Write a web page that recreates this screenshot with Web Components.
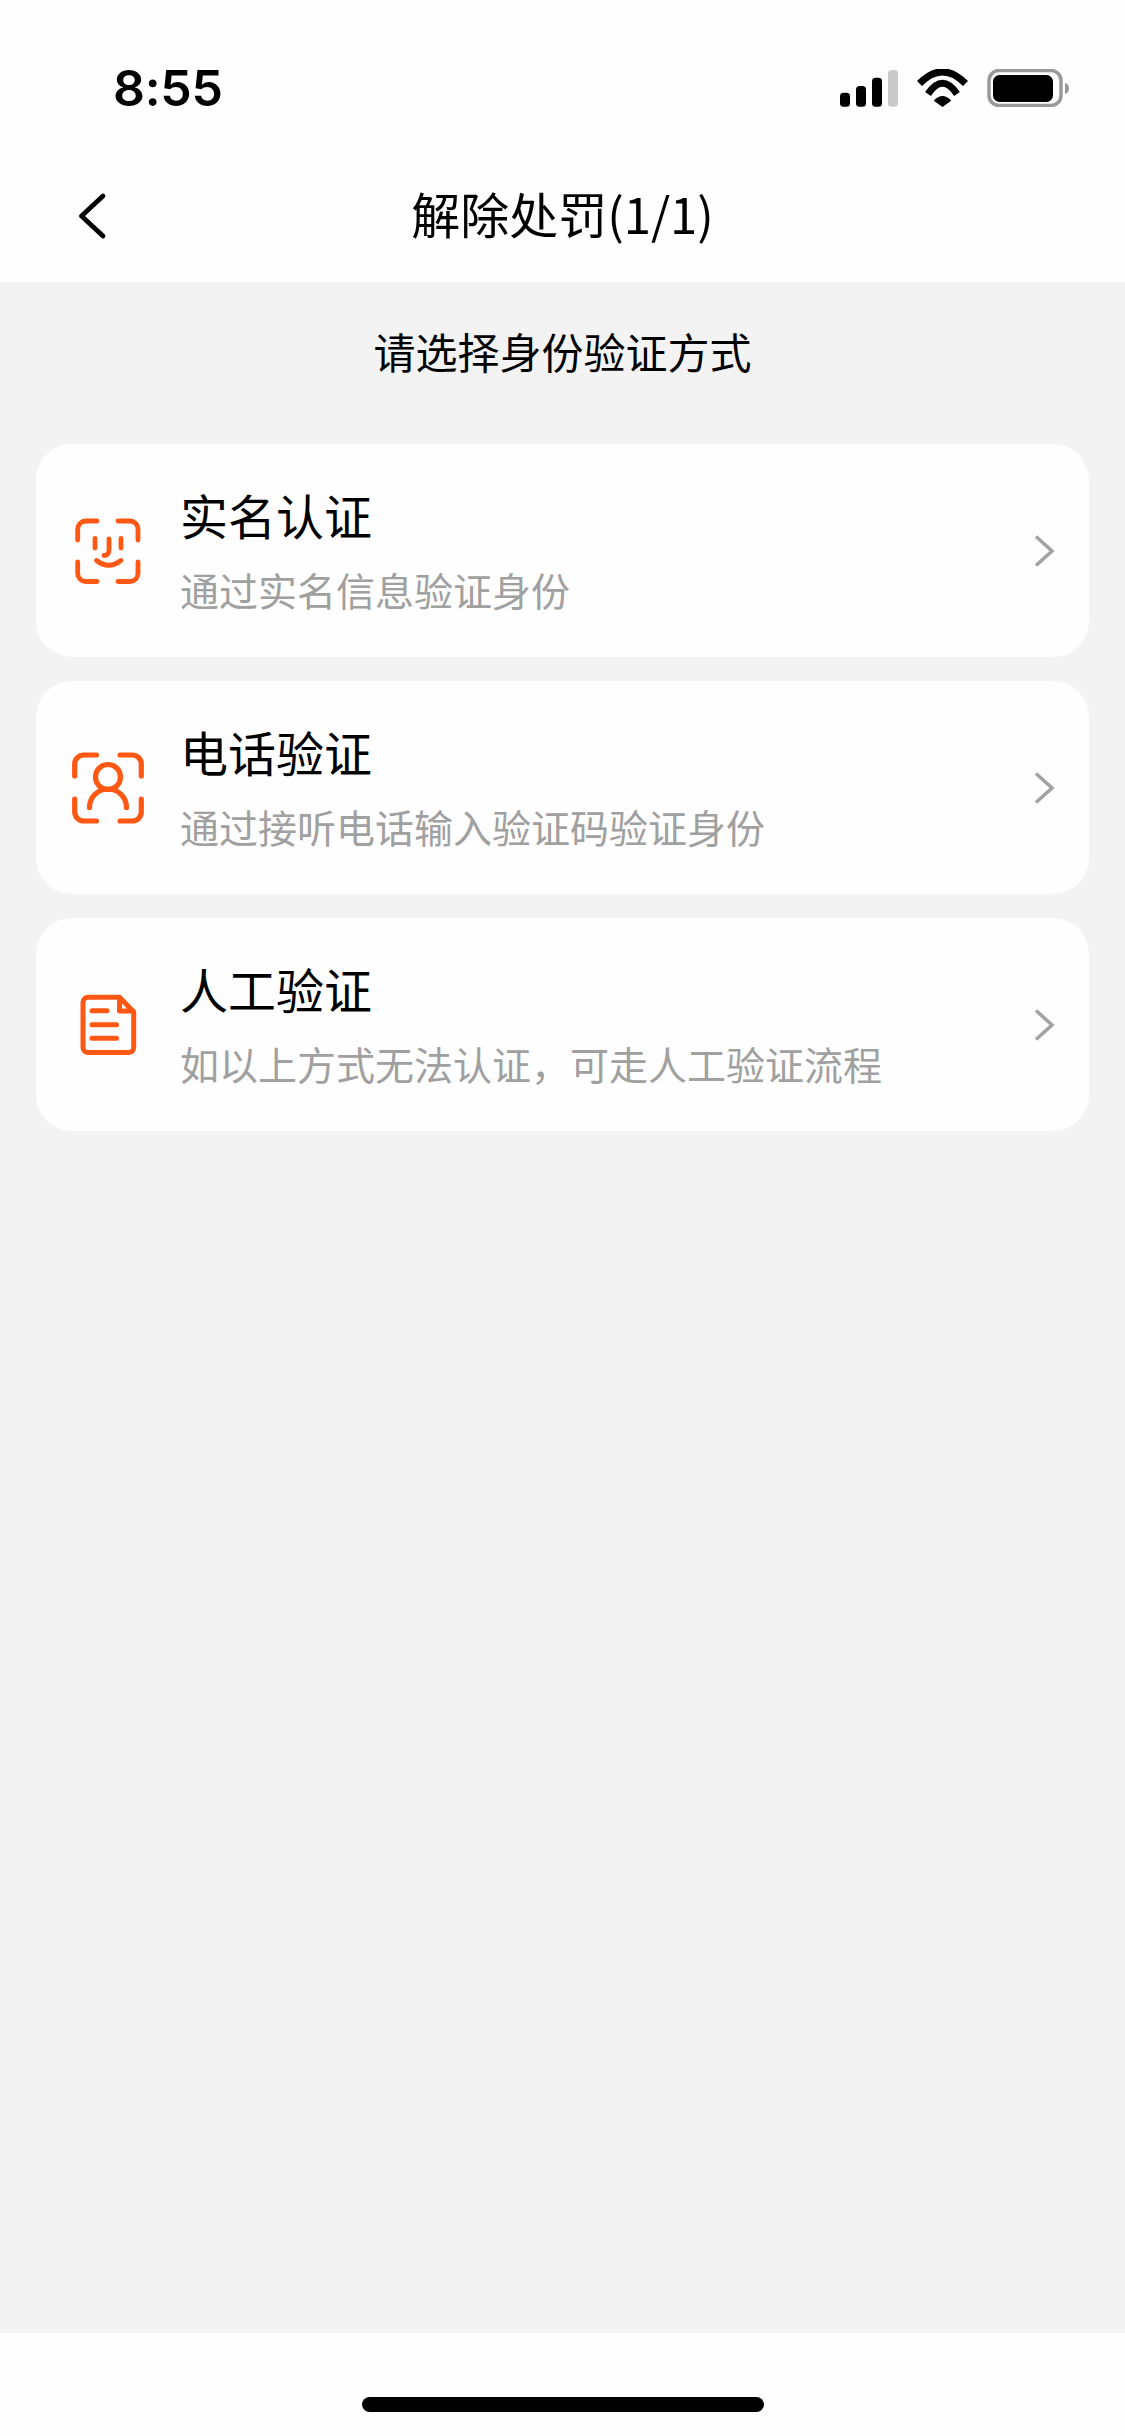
<!DOCTYPE html>
<html lang="zh-CN">
<head>
<meta charset="utf-8">
<title>解除处罚</title>
<style>
html,body{margin:0;padding:0;background:#f3f3f3}
body{font-family:"Noto Sans CJK SC","Noto Sans",sans-serif;color:#000}
</style>
</head>
<body>
<app-page>
  <status-bar slot="top" time="8:55"></status-bar>
  <nav-bar slot="top">解除处罚(1/1)</nav-bar>
  <verify-list heading="请选择身份验证方式">
    <verify-card>
      <svg slot="icon" width="72" height="72" viewBox="0 0 72 72" fill="none" stroke="#ff5714" stroke-width="4.800" stroke-linecap="round" stroke-linejoin="round">
        <path d="M5.700 25V14a8 8 0 0 1 8-8H25"/>
        <path d="M46 6h12a8 8 0 0 1 8 8v11"/>
        <path d="M5.700 47v11.500a8 8 0 0 0 8 8H25"/>
        <path d="M46 66.500h12a8 8 0 0 0 8-8V47"/>
        <path d="M23 23.500V33M49 23.500V33"/>
        <path d="M37 24v11c0 3.500-2 5.500-5 5.500"/>
        <path d="M24.500 45.500Q36.500 55 49 45.500"/>
      </svg>
      <span slot="title">实名认证</span>
      <span slot="sub">通过实名信息验证身份</span>
    </verify-card>
    <verify-card>
      <svg slot="icon" width="72" height="72" viewBox="0 0 72 72" fill="none" stroke="#ff5714" stroke-width="5.200" stroke-linecap="round" stroke-linejoin="round">
        <path d="M2.700 24V12a9 9 0 0 1 9-9H24.500"/>
        <path d="M48 3h12.300a9 9 0 0 1 9 9v12"/>
        <path d="M2.700 47v13a9 9 0 0 0 9 9H24.500"/>
        <path d="M48 69h12.300a9 9 0 0 0 9-9V47"/>
        <circle cx="36" cy="25" r="12.500"/>
        <path d="M17.500 55.500a18.500 18.500 0 0 1 37 0"/>
      </svg>
      <span slot="title">电话验证</span>
      <span slot="sub">通过接听电话输入验证码验证身份</span>
    </verify-card>
    <verify-card>
      <svg slot="icon" width="72" height="72" viewBox="0 0 72 72" fill="none" stroke="#ff5714" stroke-width="5" stroke-linecap="round" stroke-linejoin="round">
        <path d="M16 8.300H47.500L61.700 23V58.500a5 5 0 0 1-5 5H16a5 5 0 0 1-5-5V13.300a5 5 0 0 1 5-5Z"/>
        <path d="M47.500 9V22H61"/>
        <path d="M20 21.700H35M20 35.700H44.500M20 49.300H44.500"/>
      </svg>
      <span slot="title">人工验证</span>
      <span slot="sub">如以上方式无法认证，可走人工验证流程</span>
    </verify-card>
  </verify-list>
  <home-indicator slot="bottom"></home-indicator>
</app-page>
<script>
function shadow(el, html){
  const r = el.attachShadow({mode:'open'});
  r.innerHTML = html;
  return r;
}
customElements.define('app-page', class extends HTMLElement{
  constructor(){super();shadow(this,`<style>
    :host{display:flex;flex-direction:column;width:1125px;height:2436px;background:#f3f3f3;overflow:hidden}
    .top{display:block;background:#fefefe;flex:none}
    .body{display:block;flex:1;min-height:0}
    .bottom{display:block;flex:none}
  </style>
  <div class="top"><slot name="top"></slot></div>
  <div class="body"><slot></slot></div>
  <div class="bottom"><slot name="bottom"></slot></div>`);}
});
customElements.define('status-bar', class extends HTMLElement{
  constructor(){super();shadow(this,`<style>
    :host{display:flex;box-sizing:border-box;height:150px;justify-content:space-between;align-items:flex-start;padding:0 55px 0 113px}
    .time{font:600 50px/50px Inter,"Liberation Sans",sans-serif;color:#000;margin-top:63px;letter-spacing:-.3px}
    svg{display:block;margin-top:69px}
  </style>
  <span class="time"></span>
  <svg width="230" height="38" viewBox="0 0 230 38">
    <rect x="0" y="23.700" width="10" height="14" rx="3.500" fill="#000"/>
    <rect x="16" y="17" width="10" height="20.700" rx="3.500" fill="#000"/>
    <rect x="32" y="8.700" width="10" height="29" rx="3.500" fill="#000"/>
    <rect x="48" y="1" width="10" height="36.700" rx="3.500" fill="#c9c9c9"/>
    <path d="M79.500 14.500Q102.500-8.500 125.500 14.500" fill="none" stroke="#000" stroke-width="7"/>
    <path d="M88 25Q102.500 3.500 117 25" fill="none" stroke="#000" stroke-width="7"/>
    <path d="M93.800 31.700L102.500 38L111.200 31.700Q102.500 22.500 93.800 31.700Z" fill="#000"/>
    <rect x="149" y="1.500" width="72" height="35" rx="10" fill="none" stroke="#999" stroke-width="3.500"/>
    <rect x="153" y="6" width="60" height="27" rx="6.500" fill="#000"/>
    <path d="M225 14c2.500.5 4 2.500 4 5.500s-1.500 5-4 5.500Z" fill="#999"/>
  </svg>`);}
  connectedCallback(){this.shadowRoot.querySelector('.time').textContent=this.getAttribute('time');}
});
customElements.define('nav-bar', class extends HTMLElement{
  constructor(){super();shadow(this,`<style>
    :host{display:grid;grid-template-columns:1fr auto 1fr;align-items:center;height:132px;padding:0 72px;box-sizing:border-box}
    svg{display:block}
    .t{font-size:49px;line-height:70px;padding-bottom:6px;color:#000;white-space:nowrap}
  </style>
  <svg width="36" height="48" viewBox="0 0 36 48" fill="none" stroke="#000" stroke-width="4.800" stroke-linecap="round" stroke-linejoin="round"><path d="M31 4L9.500 24L31 44"/></svg>
  <span class="t"><slot></slot></span><span></span>`);}
});
customElements.define('verify-list', class extends HTMLElement{
  constructor(){super();shadow(this,`<style>
    :host{display:flex;flex-direction:column;padding:0 36px 0}
    .h{font-size:42px;line-height:138px;text-align:center;margin-bottom:24px;color:#000}
    .list{display:flex;flex-direction:column;gap:24px}
  </style>
  <div class="h"></div>
  <div class="list"><slot></slot></div>`);}
  connectedCallback(){this.shadowRoot.querySelector('.h').textContent=this.getAttribute('heading');}
});
customElements.define('verify-card', class extends HTMLElement{
  constructor(){super();shadow(this,`<style>
    :host{display:flex;align-items:center;box-sizing:border-box;height:213px;background:#fefefe;border-radius:36px;padding:0 33px 0 36px}
    .icon{flex:none;width:72px;height:72px;margin-right:36px;display:block}
    .text{flex:1;display:flex;flex-direction:column;gap:22px;padding-bottom:1px;min-width:0}
    .title{font-size:48px;line-height:56px;color:#000}
    .sub{font-size:39px;line-height:50px;color:#a0a0a0}
    svg{flex:none;display:block}
  </style>
  <div class="icon"><slot name="icon"></slot></div>
  <div class="text"><div class="title"><slot name="title"></slot></div><div class="sub"><slot name="sub"></slot></div></div>
  <svg width="24" height="36" viewBox="0 0 24 36" fill="none" stroke="#a3a3a3" stroke-width="3.600"><path d="M4 3.500L20 18L4 32.500"/></svg>`);}
});
customElements.define('home-indicator', class extends HTMLElement{
  constructor(){super();shadow(this,`<style>
    :host{display:flex;justify-content:center;box-sizing:border-box;height:103px;padding-top:64px;background:#fefefe}
    i{display:block;width:402px;height:15px;border-radius:8px;background:#000}
  </style><i></i>`);}
});
</script>
</body>
</html>
